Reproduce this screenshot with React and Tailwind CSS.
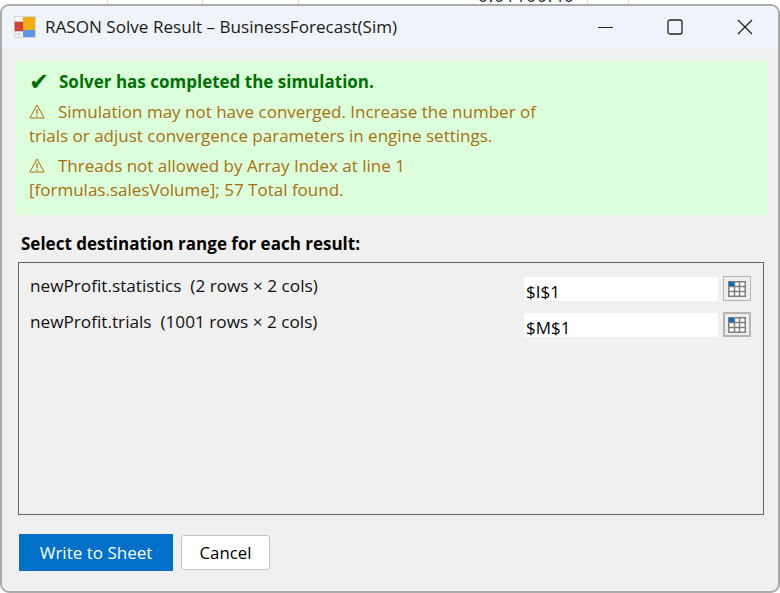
import React from "react";

const FONT = "font-['Open_Sans','Noto_Sans',sans-serif]";

const AppIcon = () => (
  <svg width="22" height="22" viewBox="0 0 22 22" className="shrink-0">
    <rect x="0.5" y="0.5" width="21" height="21" fill="#f4f4f4" stroke="#d8d8d8" />
    <rect x="1" y="6" width="8" height="9" fill="#d8403a" stroke="#a83a34" strokeWidth="0.6" />
    <rect x="9" y="1" width="12" height="13" fill="#f2ae10" />
    <rect x="9" y="14" width="12" height="7" fill="#5b97ea" />
    <path d="M5 15v6M1 18h8" stroke="#d8d8d8" />
  </svg>
);

const WarnIcon = () => (
  <svg width="16" height="15" viewBox="0 0 16 15" className="inline-block align-[-1px] mr-[13px]">
    <path d="M8 1L15.2 14H.8z" fill="none" stroke="#a8700f" strokeWidth="1" />
    <path d="M8 5v5M8 11v1.5" stroke="#a8700f" strokeWidth="1.2" />
  </svg>
);

const GridIcon = ({ thick }) => (
  <button
    className={`w-[28px] h-[25px] flex items-center justify-center bg-[#eeeeee] border-[#b5b5b5] ${
      thick ? "border-2" : "border"
    }`}
  >
    <svg width="18" height="16" viewBox="0 0 18 16">
      <rect x="0.75" y="0.75" width="16.5" height="14.5" fill="#fff" stroke="#7f7f7f" strokeWidth="1.5" />
      <path d="M6.5 0v16M11.5 0v16M0 5.5h18M0 10.5h18" stroke="#7f7f7f" strokeWidth="1.5" />
      <rect x="1" y="1" width="5" height="4" fill="#0070c9" />
    </svg>
  </button>
);

const ResultRow = ({ label, value, thick }) => (
  <div className="flex items-start h-[36px]">
    <span className="w-[494px] text-[17.2px] leading-[24px] text-[#111] whitespace-pre">{label}</span>
    <div className="w-[194px] h-[24px] mt-[3px] bg-white pl-[2px] text-[17px] leading-[30px] text-black">
      {value}
    </div>
    <div className="ml-[5px] mt-[2px]">
      <GridIcon thick={thick} />
    </div>
  </div>
);

export default function App() {
  return (
    <div className={`relative w-[780px] h-[593px] overflow-hidden bg-white ${FONT}`}>
      {/* spreadsheet behind the dialog */}
      <div className="absolute inset-x-0 top-0 h-[4px] flex pl-[107px]">
        <div className="w-[95px] h-full border-l border-[#d8d8d8]" />
        <div className="w-[96px] h-full border-l border-[#d8d8d8]" />
        <div className="w-[192px] h-full border-l border-[#d8d8d8]" />
        <div className="w-[97px] h-full border-l border-[#d8d8d8]" />
        <div className="w-[41px] h-full border-l border-[#d8d8d8]" />
        <div className="w-[40px] h-full border-l border-[#d8d8d8]" />
      </div>
      <div className="absolute left-[478px] top-0 h-[5px] overflow-hidden">
        <div className="-mt-[13px] text-[17px] leading-[18px] text-[#222] tracking-[1px]">0.01100.40</div>
      </div>

      <div className="absolute left-0 top-[4px] w-[780px] h-[589px] flex flex-col rounded-[9px] bg-[#f0f0f0] border-2 border-[#ababab] overflow-hidden">
        <div className="h-[42px] shrink-0 flex items-center bg-[#eef4f9] pl-[12px]">
          <AppIcon />
          <span className="ml-[9px] text-[17.1px] text-[#1a1a1a]">RASON Solve Result – BusinessForecast(Sim)</span>
          <div className="ml-auto flex items-center">
            <svg width="16" height="16" viewBox="0 0 16 16" className="mr-[53px]">
              <path d="M0 8.5h15" stroke="#222" />
            </svg>
            <svg width="16" height="16" viewBox="0 0 16 16" className="mr-[54px]">
              <rect x="1" y="1" width="14" height="14" rx="2" fill="none" stroke="#222" strokeWidth="1.3" />
            </svg>
            <svg width="16" height="16" viewBox="0 0 16 16" className="mr-[25px]">
              <path d="M1 1l14 14M15 1L1 15" stroke="#222" strokeWidth="1.3" />
            </svg>
          </div>
        </div>

        <div className="flex-1 flex flex-col pl-[13px] pr-[10px] pt-[13px]">
          <div className="h-[154px] w-[753px] bg-[#dcffdc] pl-[14px] pt-[7px]">
            <div className="flex items-center h-[28px] text-[#007000] font-bold text-[17px]">
              <span className="w-[30px] font-['DejaVu_Sans',sans-serif] text-[24px] leading-[28px]">✔</span>
              Solver has completed the simulation.
            </div>
            <p className="mt-[4px] text-[17px] leading-[24px] text-[#a8700f] w-[530px]">
              <WarnIcon />
              Simulation may not have converged. Increase the number of trials or adjust convergence parameters in engine settings.
            </p>
            <p className="mt-[6px] text-[17px] leading-[24px] text-[#a8700f] w-[420px]">
              <WarnIcon />
              Threads not allowed by Array Index at line 1 [formulas.salesVolume]; 57 Total found.
            </p>
          </div>

          <div className="mt-[18px] ml-[6px] font-bold text-[17px] leading-[22px] text-black">
            Select destination range for each result:
          </div>

          <div className="mt-[7px] ml-[3px] w-[746px] h-[253px] border border-[#666] pl-[11px] pt-[11px]">
            <ResultRow label="newProfit.statistics  (2 rows × 2 cols)" value="$I$1" />
            <ResultRow label="newProfit.trials  (1001 rows × 2 cols)" value="$M$1" thick />
          </div>

          <div className="mt-[19px] ml-[4px] flex items-center gap-[8px]">
            <button className="w-[154px] h-[37px] bg-[#0070c9] text-white text-[17px]">Write to Sheet</button>
            <button className="w-[89px] h-[35px] bg-white border border-[#c4c4c4] rounded-[3px] text-[16.8px] text-black">Cancel</button>
          </div>
        </div>
      </div>
    </div>
  );
}
